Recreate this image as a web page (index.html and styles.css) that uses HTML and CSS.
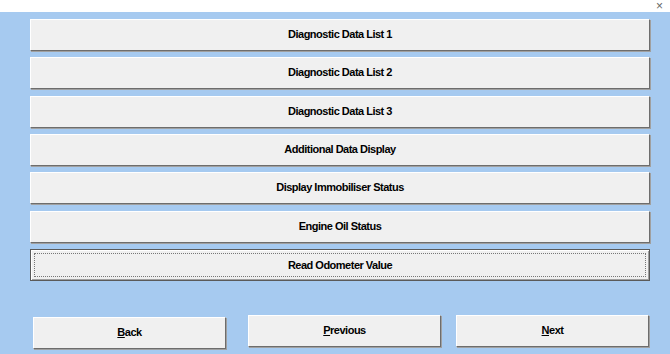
FILE: index.html
```html
<!DOCTYPE html>
<html lang="en">
<head>
  <meta charset="UTF-8">
  <meta name="viewport" content="width=device-width, initial-scale=1.0">
  <title>Diagnostics</title>
  <link rel="stylesheet" href="styles.css">
</head>
<body>
  <div class="titlebar">
    <span class="close">×</span>
  </div>

  <div class="panel">
    <div class="menu">
      <button class="btn">Diagnostic Data List 1</button>
      <button class="btn">Diagnostic Data List 2</button>
      <button class="btn">Diagnostic Data List 3</button>
      <button class="btn">Additional Data Display</button>
      <button class="btn">Display Immobiliser Status</button>
      <button class="btn">Engine Oil Status</button>
      <button class="btn focused"><span class="focus-ring">Read Odometer Value</span></button>
    </div>

    <div class="nav">
      <button class="btn nav-btn back"><u>B</u>ack</button>
      <button class="btn nav-btn prev"><u>P</u>revious</button>
      <button class="btn nav-btn next"><u>N</u>ext</button>
    </div>
  </div>
</body>
</html>
```

FILE: styles.css
```css
html, body {
  margin: 0;
  padding: 0;
}
body {
  width: 670px;
  height: 354px;
  overflow: hidden;
  font-family: "Liberation Sans", Arial, sans-serif;
  background-color: #a6caf0;
}
.titlebar {
  height: 12px;
  background: #fff;
  display: flex;
  justify-content: flex-end;
  align-items: center;
  padding-right: 7px;
}
.close {
  font-size: 12px;
  line-height: 12px;
  color: #666;
}
.panel {
  padding: 7px 0 0 30px;
}
.menu {
  display: flex;
  flex-direction: column;
  gap: 6.33px;
  width: 620px;
}
.btn {
  box-sizing: border-box;
  height: 32px;
  margin: 0;
  padding: 0 0 2px;
  background: #f0f0f0;
  border: 1px solid;
  border-color: #fff #6d6d6d #6d6d6d #fff;
  box-shadow: 1px 1px 0 #a0a0a0;
  font-family: "Liberation Sans", Arial, sans-serif;
  font-weight: bold;
  font-size: 11px;
  letter-spacing: -0.5px;
  color: #000;
}
.focused {
  border: 1px solid #5a5a5a;
  box-shadow: inset 1px 1px 0 #fff, inset -1px -1px 0 #a0a0a0;
  padding: 3px;
}
.focus-ring {
  display: flex;
  align-items: center;
  justify-content: center;
  height: 100%;
  border: 1px dotted #777;
  box-sizing: border-box;
}
.nav {
  display: flex;
  align-items: flex-start;
  margin-top: 34px;
}
.nav-btn {
  width: 193px;
}
.back {
  margin: 2px 0 0 3px;
}
.prev {
  margin-left: 22px;
}
.next {
  margin-left: 15px;
}
```
